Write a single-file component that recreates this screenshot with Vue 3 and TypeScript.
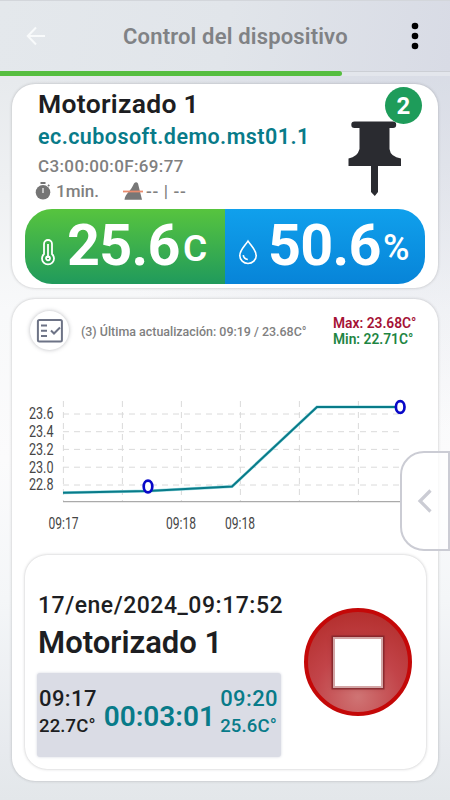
<script setup lang="ts">
interface Tick {
  label: string
  pos: number
}

const yTicks: Tick[] = [
  { label: '23.6', pos: 414 },
  { label: '23.4', pos: 431.7 },
  { label: '23.2', pos: 449.4 },
  { label: '23.0', pos: 467.2 },
  { label: '22.8', pos: 485 },
]
const gridX: number[] = [63.4, 122.4, 181.4, 240.4, 299.4, 358.4]
const xLabels: Tick[] = [
  { label: '09:17', pos: 48.5 },
  { label: '09:18', pos: 166 },
  { label: '09:18', pos: 225 },
]
</script>

<template>
  <main class="screen">
    <header class="bar">
      <svg class="back" viewBox="0 0 20 20"><path d="M19 10H2M10 1.5L1.8 10L10 18.5" /></svg>
      <h1>Control del dispositivo</h1>
      <svg class="more" viewBox="0 0 8 28"><circle cx="4" cy="4" r="3.3" /><circle cx="4" cy="14" r="3.3" /><circle cx="4" cy="24" r="3.3" /></svg>
    </header>
    <div class="progress"><div class="done"></div></div>

    <section class="card device">
      <div class="top">
        <div class="info">
          <h2>Motorizado 1</h2>
          <p class="pkg">ec.cubosoft.demo.mst01.1</p>
          <p class="mac">C3:00:00:0F:69:77</p>
          <div class="meta">
            <svg class="timer" viewBox="0 0 16 18"><circle cx="8" cy="10.3" r="7.3" /><path d="M5.500 0h5v2h-5zM12.400 3.500l1.200-1.200 1.300 1.300-1.200 1.200z" /><path class="hand" d="M8 6v5" /></svg>
            <span class="min">1min.</span>
            <svg class="range" viewBox="0 0 20 18"><path d="M11 1.500Q13.200-.8 15 1.500L19 17.700H1.500C2 12 8 9 11 1.500z" /><path class="cut" d="M0 9.500h20" /></svg>
            <span class="dashes">-- | --</span>
          </div>
        </div>
        <div class="pin">
          <svg viewBox="0 0 54 76"><path d="M5.500 .5h38.500a3.200 3.200 0 0 1 0 6.400h-3.500v21q1 8 11.500 9.500v7.600H29v26l-3.200 4-3.800-4v-26H-.5v-7.600q9-1.500 11-9.500v-21H5.500a3.200 3.200 0 0 1 0-6.400z" /></svg>
          <span class="badge">2</span>
        </div>
      </div>
      <div class="readings">
        <div class="reading temp">
          <svg class="thermo" viewBox="0 0 14 26"><path d="M3 15V5a4 4 0 0 1 8 0v10a6 6 0 1 1-8 0z" /><path d="M7 5v14" /><circle cx="7" cy="19.300" r="2" /></svg>
          <span class="value">25.6</span><span class="unit">C</span>
        </div>
        <div class="reading hum">
          <svg class="drop" viewBox="0 0 22 28"><path d="M11 2C7 8 2 12 2 18a9 8.600 0 0 0 18 0C20 12 15 8 11 2z" /><path d="M5.800 17.500c.4 3 2.200 4.500 5 4.800" /></svg>
          <span class="value">50.6</span><span class="unit">%</span>
        </div>
      </div>
    </section>

    <section class="card history">
      <div class="summary">
        <div class="list">
          <svg viewBox="0 0 28 26"><rect x="1.900" y="1.900" width="24" height="21.500" rx="1.500" /><path d="M5 7.500h6M5 12.800h6M5 18h6M15 12.500l3 3 6-6" /></svg>
        </div>
        <span class="updated">(3) Última actualización: 09:19 / 23.68C°</span>
        <div class="extremes">
          <div class="max">Max: 23.68C°</div>
          <div class="low">Min: 22.71C°</div>
        </div>
      </div>

      <svg class="chart" viewBox="12 390 426 150">
        <g class="grid">
          <path v-for="t in yTicks" :key="t.label" :d="`M63 ${t.pos}H400`" />
          <path v-for="x in gridX" :key="x" :d="`M${x} 401V501`" />
        </g>
        <path class="axis" d="M63 501.600H401" />
        <path class="halo" d="M63 492.700L148 491L232 486.500L317 407H400" />
        <path class="line" d="M63 492.700L148 491L232 486.500L317 407H400" />
        <ellipse class="dot" cx="148" cy="486.500" rx="4.300" ry="5.800" />
        <ellipse class="dot" cx="400.200" cy="407" rx="4.300" ry="5.800" />
        <text v-for="t in yTicks" :key="'l' + t.label" x="29" :y="t.pos + 5.300" textLength="24.500" lengthAdjust="spacingAndGlyphs">{{ t.label }}</text>
        <text v-for="t in xLabels" :key="t.pos" :x="t.pos" y="528.500" textLength="30" lengthAdjust="spacingAndGlyphs">{{ t.label }}</text>
      </svg>

      <div class="session">
        <div class="details">
          <p class="date">17/ene/2024_09:17:52</p>
          <h3>Motorizado 1</h3>
          <div class="span">
            <div class="side start"><b>09:17</b><span>22.7C°</span></div>
            <strong>00:03:01</strong>
            <div class="side end"><b>09:20</b><span>25.6C°</span></div>
          </div>
        </div>
        <div class="stop"><div class="square"></div></div>
      </div>
    </section>

    <div class="drawer">
      <svg viewBox="0 0 14 24"><path d="M12.500 1.500L2 12l10.500 10.500" /></svg>
    </div>
  </main>
</template>

<style>
body {
  margin: 0;
}
</style>

<style scoped>
* {
  box-sizing: border-box;
}
h1, h2, h3, p {
  margin: 0;
}
svg {
  display: block;
  flex: none;
  overflow: visible;
}
.screen {
  position: relative;
  width: 450px;
  height: 800px;
  overflow: hidden;
  font-family: Roboto, sans-serif;
  font-weight: 500;
  color: #1d1e22;
  white-space: nowrap;
  background:
    radial-gradient(circle at 100% 0, rgba(205, 209, 224, .65), rgba(205, 209, 224, 0) 430px),
    linear-gradient(180deg, #e7eaed 80px, #eef0f2 180px, #f8f9fa 310px, #fbfbfc 460px, #f4f6f8 600px, #e7eaee 750px, #e3e7ea);
}
.bar {
  display: flex;
  align-items: center;
  height: 71px;
  padding: 0 31px 0 26px;
  border-top: 1px solid #d3d6db;
  background: linear-gradient(100deg, #e4e8ec, #e1e5ea 50%, #d8dbe5);
}
.back {
  width: 20px;
  height: 20px;
}
.back path {
  fill: none;
  stroke: #f8fafb;
  stroke-width: 2;
}
h1 {
  margin-left: 77px;
  padding-top: 2px;
  font-size: 22px;
  line-height: 26px;
  font-weight: 600;
  letter-spacing: .17px;
  color: #808285;
}
.more {
  width: 8px;
  height: 28px;
  margin-left: auto;
}
.progress {
  height: 5px;
  border-top: 1px solid #cccfd5;
  background: #e3e6ec;
}
.done {
  width: 342px;
  height: 5px;
  margin-top: -1px;
  border-radius: 0 3px 3px 0;
  background: #56be40;
}
.card {
  width: 426px;
  margin-left: 12px;
  border-radius: 23px;
  background: #fff;
  box-shadow: 0 0 3px rgba(70, 70, 75, .32);
}
.device {
  height: 204px;
  margin-top: 7.500px;
  padding: 0 13px;
}
.top {
  display: flex;
  justify-content: space-between;
  height: 125.500px;
}
.info {
  padding: 4px 0 0 13px;
}
h2 {
  font-size: 26.500px;
  line-height: 32px;
  font-weight: 600;
  letter-spacing: .3px;
}
.pkg {
  font-size: 21.500px;
  line-height: 34px;
  font-weight: 600;
  letter-spacing: .44px;
  color: #087b89;
}
.mac {
  font-size: 17px;
  line-height: 25px;
  letter-spacing: .37px;
  color: #808080;
}
.meta {
  display: flex;
  align-items: center;
  height: 25px;
  margin-left: -3px;
  font-size: 17px;
  color: #808080;
}
.timer {
  width: 16px;
  height: 18px;
  fill: #757575;
}
.hand {
  stroke: #ddd;
  stroke-width: 1.500;
}
.min {
  width: 72px;
  padding-left: 5px;
}
.range {
  width: 20px;
  height: 18px;
  fill: #777;
}
.cut {
  stroke: #e98b6d;
  stroke-width: 1.800;
}
.dashes {
  padding-left: 3px;
  letter-spacing: .65px;
}
.pin {
  position: relative;
  padding: 38px 22px 0 0;
}
.pin svg {
  width: 54px;
  height: 76px;
  margin-top: -1px;
  fill: #2a2b30;
}
.badge {
  position: absolute;
  top: 3px;
  right: 3px;
  width: 37px;
  height: 37px;
  border-radius: 50%;
  background: #1e9c5a;
  color: #fff;
  font-size: 24px;
  line-height: 39px;
  font-weight: 700;
  text-align: center;
}
.readings {
  display: flex;
  height: 74.500px;
  border-radius: 27px;
  overflow: hidden;
  color: #fff;
}
.reading {
  display: flex;
  width: 200px;
}
.temp {
  padding-left: 16px;
  background: linear-gradient(#57c43e, #209a5c);
}
.hum {
  padding-left: 13px;
  background: linear-gradient(#10a0ec, #0784d8);
}
.reading svg {
  fill: none;
  stroke: #fff;
  stroke-width: 1.800;
}
.thermo {
  width: 14px;
  height: 26px;
  margin-top: 30px;
}
.drop {
  width: 20px;
  height: 26px;
  margin-top: 30px;
}
.value {
  width: 117px;
  font-size: 57.500px;
  line-height: 74px;
  font-weight: 700;
  letter-spacing: -.7px;
}
.temp .value {
  margin-left: 12px;
}
.hum .value {
  margin-left: 10px;
}
.unit {
  font-size: 37px;
  line-height: 79px;
  font-weight: 600;
}
.temp .unit {
  margin-left: -1px;
}
.hum .unit {
  margin-left: -2px;
  font-size: 36px;
  font-weight: 500;
}
.history {
  height: 482px;
  margin-top: 11.500px;
}
.summary {
  display: flex;
  height: 91px;
  padding: 12px 0 0 18px;
}
.list {
  display: grid;
  place-items: center;
  width: 39px;
  height: 39px;
  border-radius: 50%;
  background: #fff;
  box-shadow: 0 0 4px rgba(60, 64, 75, .35);
}
.list svg {
  width: 28px;
  height: 26px;
  fill: none;
  stroke: #6d7386;
  stroke-width: 2;
}
.updated {
  width: 252px;
  margin-left: 12px;
  font-size: 12.450px;
  line-height: 42px;
  color: #808080;
}
.extremes {
  padding-top: 4px;
  font-size: 13.800px;
  line-height: 16px;
  font-weight: 600;
}
.max {
  color: #a51235;
}
.low {
  color: #1e8542;
}
.chart {
  width: 426px;
  height: 150px;
}
.grid {
  fill: none;
  stroke: #dadada;
  stroke-width: 1;
  stroke-dasharray: 6 5;
}
.axis {
  stroke: #aaa;
  stroke-width: 1.200;
}
.halo,
.line {
  fill: none;
  stroke: #97d8df;
  stroke-width: 3;
}
.line {
  stroke: #087b89;
  stroke-width: 2;
}
.dot {
  fill: #fff;
  stroke: #0808c8;
  stroke-width: 2.700;
}
.chart text {
  fill: #454545;
  font-size: 16px;
  font-weight: 400;
}
.session {
  display: flex;
  justify-content: space-between;
  width: 401px;
  height: 214px;
  margin: 15px 0 0 13px;
  padding: 0 14px 0 12px;
  border-radius: 22px;
  background: #fff;
  box-shadow: 0 0 3px rgba(70, 70, 75, .35);
}
.details {
  width: 244px;
  padding-top: 35px;
}
.date {
  padding-left: 1px;
  font-size: 23px;
  line-height: 32px;
  letter-spacing: .52px;
}
h3 {
  padding-left: 1px;
  font-size: 31px;
  line-height: 42px;
  font-weight: 600;
}
.span {
  display: flex;
  height: 84px;
  margin-top: 9px;
  padding: 12px 3px 0 2px;
  border-radius: 3px;
  background: #dadce5;
  box-shadow: 0 0 3px #d4d6df;
}
.side {
  display: flex;
  flex-direction: column;
  width: 65px;
  font-size: 18.500px;
  line-height: 27px;
  letter-spacing: .15px;
}
.side b {
  font-size: 22px;
  line-height: 28px;
  font-weight: 500;
  letter-spacing: .4px;
}
.span strong {
  width: 117px;
  font-size: 28px;
  line-height: 64px;
  font-weight: 600;
}
.end,
.span strong {
  color: #087b89;
}
.side.end {
  width: 58px;
  margin-left: auto;
}
.stop {
  display: grid;
  place-items: center;
  width: 108px;
  height: 108px;
  margin-top: 53px;
  border: 4px solid #c40808;
  border-radius: 50%;
  background: radial-gradient(circle at 50% 85%, #cf7474, #c24449 45%, #b5302f 85%);
}
.square {
  width: 50px;
  height: 51px;
  border: 2px solid #d3a6a6;
  background: #fff;
  box-shadow: 0 0 0 1.500px rgba(125, 35, 40, .75), 0 0 4px rgba(110, 20, 25, .5);
}
.drawer {
  position: absolute;
  top: 451px;
  left: 400px;
  display: flex;
  align-items: center;
  width: 50px;
  height: 100px;
  padding-left: 16px;
  border: 2px solid #cbccd4;
  border-radius: 24px 0 0 24px;
  background: rgba(255, 255, 255, .75);
}
.drawer svg {
  width: 14px;
  height: 24px;
  fill: none;
  stroke: #cbccd4;
  stroke-width: 3.200;
}
</style>
